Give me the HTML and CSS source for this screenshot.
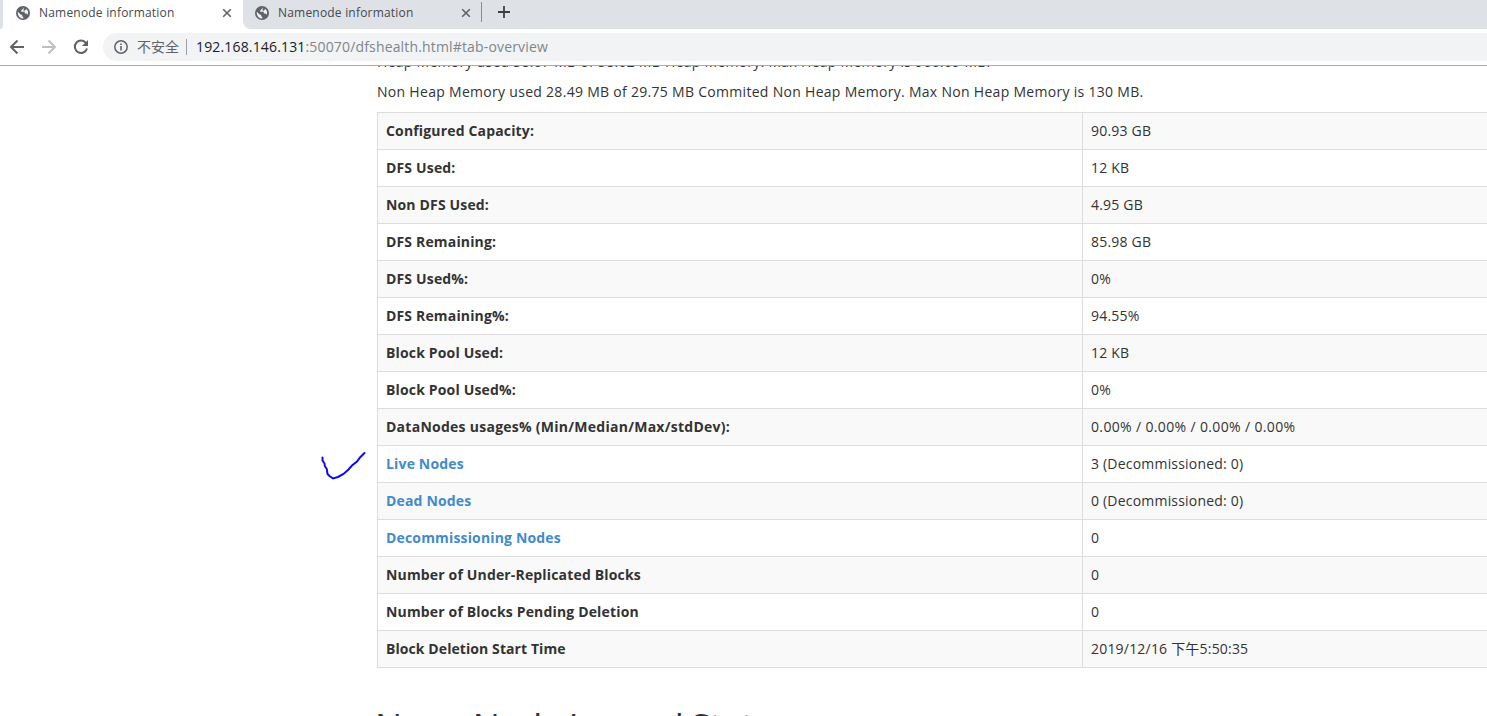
FILE: index.html
```html
<!DOCTYPE html>
<html lang="en">
<head>
<meta charset="utf-8">
<title>Namenode information</title>
<link rel="stylesheet" href="styles.css">
</head>
<body>
<svg class="defs" width="0" height="0">
  <symbol id="globe" viewBox="0 0 24 24"><circle cx="12" cy="12" r="12" fill="#5f6368"/><path d="M3 10l5.500 5h2v2.200l2 2v2.300A9.500 9.500 0 0 1 3 12zM12 3v1.900c-1 1.500-2.800 1.500-3 3.100v2h6v3h2.800l2 1.800c2-4.200.7-8-2.700-10.300v1.500l-2.500 2h-1.600V3z" fill="#f1f3f4"/></symbol>
  <symbol id="close" viewBox="0 0 10 10"><path d="M1.200 1.200l7.600 7.600M8.800 1.200L1.200 8.800" stroke="#5f6368" stroke-width="1.600" fill="none"/></symbol>
</svg>
<header class="browser">
  <div class="tabs">
    <div class="sliver"></div>
    <div class="tab active"><svg class="globe"><use href="#globe"/></svg><span class="tab-title">Namenode information</span><svg class="close"><use href="#close"/></svg></div>
    <div class="rest">
      <div class="tab"><svg class="globe"><use href="#globe"/></svg><span class="tab-title">Namenode information</span><svg class="close"><use href="#close"/></svg></div>
      <i class="separator"></i>
      <svg class="plus" viewBox="0 0 12 12"><path d="M6 0v12M0 6h12" stroke="#3c4043" stroke-width="1.800"/></svg>
    </div>
  </div>
  <div class="toolbar">
    <svg class="nav" viewBox="0 0 16 16"><path d="M15 8H2M8.500 1.500L2 8l6.500 6.500" stroke="#5f6368"/></svg>
    <svg class="nav" viewBox="0 0 16 16"><path d="M1 8h13M7.500 1.500L14 8l-6.500 6.500" stroke="#bdc1c6"/></svg>
    <svg class="nav" viewBox="0 0 16 16"><path d="M13.200 4.300A6.200 6.200 0 1 0 14 9.500" stroke="#5f6368"/><path d="M15 1v6H9z" fill="#5f6368" stroke="none"/></svg>
    <div class="omnibox">
      <svg class="info" viewBox="0 0 14 14"><circle cx="7" cy="7" r="6.200" stroke="#5f6368" stroke-width="1.500" fill="none"/><path d="M7 6v4.500M7 3.400V5" stroke="#5f6368" stroke-width="1.600"/></svg>
      <span class="insecure">不安全</span><i class="bar"></i>
      <span class="url"><b>192.168.146.131</b>:50070/dfshealth.html#tab-overview</span>
    </div>
  </div>
</header>
<main class="page">
  <p class="memory heap">Heap Memory used 38.67 MB of 58.62 MB Heap Memory. Max Heap Memory is 966.69 MB.</p>
  <p class="memory">Non Heap Memory used 28.49 MB of 29.75 MB Commited Non Heap Memory. Max Non Heap Memory is 130 MB.</p>
  <table class="summary">
    <tr><th>Configured Capacity:</th><td>90.93 GB</td></tr>
    <tr><th>DFS Used:</th><td>12 KB</td></tr>
    <tr><th>Non DFS Used:</th><td>4.95 GB</td></tr>
    <tr><th>DFS Remaining:</th><td>85.98 GB</td></tr>
    <tr><th>DFS Used%:</th><td>0%</td></tr>
    <tr><th>DFS Remaining%:</th><td>94.55%</td></tr>
    <tr><th>Block Pool Used:</th><td>12 KB</td></tr>
    <tr><th>Block Pool Used%:</th><td>0%</td></tr>
    <tr class="usages"><th>DataNodes usages% (Min/Median/Max/stdDev):</th><td>0.00% / 0.00% / 0.00% / 0.00%</td></tr>
    <tr><th><a>Live Nodes</a></th><td>3 (Decommissioned: 0)</td></tr>
    <tr><th><a>Dead Nodes</a></th><td>0 (Decommissioned: 0)</td></tr>
    <tr><th><a>Decommissioning Nodes</a></th><td>0</td></tr>
    <tr><th>Number of Under-Replicated Blocks</th><td>0</td></tr>
    <tr><th>Number of Blocks Pending Deletion</th><td>0</td></tr>
    <tr class="deletion"><th>Block Deletion Start Time</th><td>2019/12/16 下午5:50:35</td></tr>
  </table>
  <h1 class="journal">NameNode Journal Status</h1>
</main>
<svg class="tick" viewBox="0 0 48 32"><path d="M2.500 7.500v3l2 3 .3 2.500 2 3 .7 5L9.500 26l3.500 2.500 5-1.500 5.500-3 5-4.500 3.500-4 5-4L40 7.500l4.500-4.500"/></svg>
</body>
</html>
```

FILE: styles.css
```css
* { box-sizing: border-box; }
body {
  margin: 0;
  width: 1487px;
  height: 716px;
  overflow: hidden;
  position: relative;
  display: flex;
  flex-direction: column;
  background: #fff;
  color: #333;
  font: 14px/20px "Open Sans", "Noto Sans", "Noto Sans CJK SC", sans-serif;
}
.defs { position: absolute; }
.browser { flex: none; height: 66px; border-bottom: 1px solid #a9aba9; }
.tabs { display: flex; height: 29px; background: #fff; }
.sliver { width: 3px; background: #dee1e6; border-radius: 0 0 8px 0; }
.tab { display: flex; align-items: center; width: 240px; height: 25px; padding-left: 13px; }
.rest { flex: 1; display: flex; background: #dee1e6; border-radius: 0 0 0 8px; }
.rest .tab { width: 238px; padding-left: 12px; }
.globe { width: 14px; height: 14px; margin-right: 9px; }
.tab-title { width: 136px; font-size: 12px; letter-spacing: .2px; white-space: nowrap; color: #45494d; }
.close { width: 10px; height: 10px; margin-left: 47px; }
.separator { width: 1px; height: 20px; margin-top: 2px; background: #888c91; }
.plus { width: 12px; height: 12px; margin: 6px 0 0 16px; }
.toolbar { display: flex; align-items: center; height: 36px; padding-left: 9px; }
.nav { width: 16px; height: 16px; margin-right: 16px; fill: none; stroke-width: 2; }
.omnibox { flex: 1; display: flex; align-items: center; height: 28px; margin-left: -2px; padding-left: 11px; background: #f1f3f4; border-radius: 14px 0 0 14px; }
.info { width: 14px; height: 14px; margin-right: 9px; }
.insecure { width: 43px; margin-top: -2px; font: 14px/20px "Noto Sans CJK SC", sans-serif; color: #5f6368; }
.bar { width: 1px; height: 16px; margin: 0 9px 0 6px; background: #9aa0a6; }
.url { color: #80868b; white-space: nowrap; letter-spacing: .16px; }
.url b { color: #202124; font-weight: 400; }
.page { flex: 1; min-height: 0; overflow: hidden; padding-left: 377px; }
.memory { margin: 0 0 10px; white-space: nowrap; letter-spacing: .295px; }
.heap { margin-top: -14px; letter-spacing: .27px; }
.summary { width: 1170px; border-collapse: collapse; table-layout: fixed; }
.summary th, .summary td { height: 37px; padding: 8px; border: 1px solid #ddd; line-height: 20px; text-align: left; }
.summary th { width: 705px; font-weight: 700; letter-spacing: .16px; }
.summary td { letter-spacing: .2px; }
.summary .usages th { letter-spacing: .26px; }
.summary .usages td { letter-spacing: .35px; }
.summary .deletion th { letter-spacing: .08px; }
.summary tr:nth-child(odd) { background: #f9f9f9; }
.summary a { color: #428bca; }
.journal { margin: 39px 0 0 -2px; font-size: 36px; line-height: 40px; font-weight: 400; letter-spacing: -.7px; word-spacing: -1px; white-space: nowrap; }
.tick { position: absolute; left: 320px; top: 450px; width: 48px; height: 32px; fill: none; stroke: #0c0cf0; stroke-width: 2; stroke-linecap: round; }
```
